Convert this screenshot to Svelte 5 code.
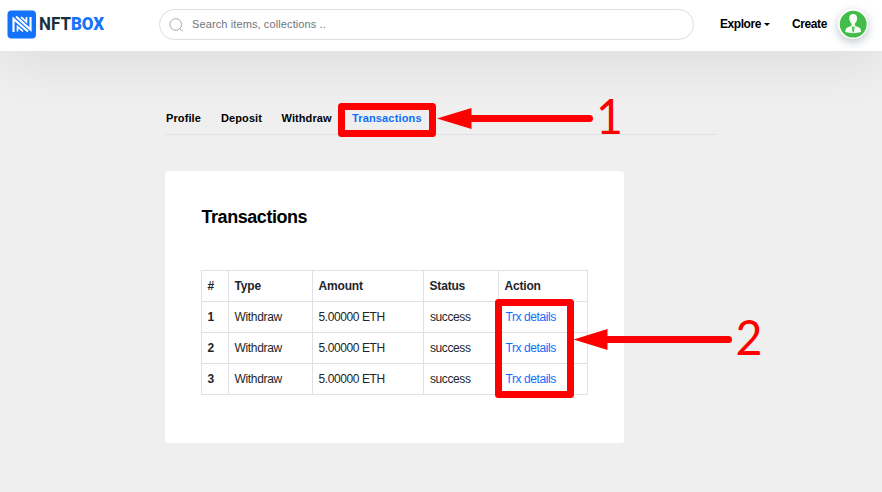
<script>
  const rows = [1, 2, 3];
</script>

<div class="page">
  <header>
    <div class="brand">
      <svg width="30" height="30" viewBox="0 0 30 30">
        <rect x="0.5" y="0.5" width="28.5" height="28" rx="4" fill="#1273fa" />
        <g fill="none" stroke="#fff" stroke-width="2.200">
          <path d="M6.500 22V9l14.500 12.500" />
          <path d="M9 6.500L23.500 19.500V7" />
          <path d="M10.500 21.500v-5l5.500 4.800" stroke-width="1.700" />
          <path d="M14 7l5.500 4.800V7" stroke-width="1.700" />
        </g>
      </svg>
      <span class="name">NFT<b>BOX</b></span>
    </div>
    <div class="search">
      <svg width="15" height="15" viewBox="0 0 15 15" fill="none" stroke="#aaa" stroke-width="1">
        <circle cx="6.700" cy="6.500" r="5.800" /><path d="M10.800 10.600l2.900 2.700" />
      </svg>
      <span>Search items, collections ..</span>
    </div>
    <nav>
      <a class="explore"><span>Explore</span><i></i></a>
      <a class="create">Create</a>
    </nav>
    <div class="avatar">
      <svg width="30" height="30" viewBox="0 0 30 30">
        <circle cx="15" cy="15" r="15" fill="#fff" />
        <circle cx="15.200" cy="15.200" r="13.400" fill="#43bd49" />
        <path d="M15.200 5c-2.800 0-4 1.900-3.900 4.400.1 2.300.9 4 2.200 5l-.1 2.400-4 1.700c-1.500.7-2 2-2.100 4.600 5 1.400 11 1.400 15.800 0-.1-2.600-.6-3.900-2.100-4.600l-4-1.700-.1-2.400c1.300-1 2.100-2.700 2.200-5 .1-2.500-1.100-4.400-3.900-4.400z" fill="#f5fff5" />
        <path d="M13.700 17l1 6.500h1l1-6.500-1.500 1.200z" fill="#43bd49" />
      </svg>
    </div>
  </header>

  <main>
    <div class="tabs">
      <a class="t1">Profile</a>
      <a class="t2">Deposit</a>
      <a class="t3">Withdraw</a>
      <a class="t4">Transactions</a>
    </div>
    <section>
      <h2>Transactions</h2>
      <table>
        <colgroup><col style="width:27px" /><col style="width:84px" /><col style="width:111px" /><col style="width:75px" /><col style="width:89px" /></colgroup>
        <thead><tr><th>#</th><th>Type</th><th>Amount</th><th>Status</th><th>Action</th></tr></thead>
        <tbody>
          {#each rows as n}
            <tr>
              <th>{n}</th><td class="w">Withdraw</td><td class="eth">5.00000 ETH</td><td class="ok">success</td><td class="link"><a>Trx details</a></td>
            </tr>
          {/each}
        </tbody>
      </table>
    </section>
  </main>

  <svg class="marks" width="882" height="492" viewBox="0 0 882 492">
    <g fill="none" stroke="#f00" stroke-width="7" stroke-linejoin="round">
      <rect x="341.500" y="106.500" width="91" height="27" />
      <rect x="498.500" y="302.500" width="72" height="92" />
    </g>
    <g stroke="#f00" stroke-width="7" stroke-linecap="round">
      <path d="M470 118.500H589.500M606 339.500H728.500" />
    </g>
    <path d="M437 118.500l34.500-10.500v21zM573.500 339.500l34-10.500v21z" fill="#f00" />
    <text x="596" y="134" textLength="27" lengthAdjust="spacingAndGlyphs">1</text>
    <text x="735.500" y="355" textLength="27" lengthAdjust="spacingAndGlyphs">2</text>
  </svg>
</div>

<style>
  .page {
    position: relative;
    width: 882px;
    height: 492px;
    overflow: hidden;
    background: #efefef;
    font-family: "Liberation Sans", Arial, sans-serif;
    color: #212529;
    font-size: 12px;
  }
  header {
    position: relative;
    display: flex;
    align-items: flex-start;
    box-sizing: border-box;
    height: 51px;
    background: #fff;
    box-shadow: 0 16px 48px rgba(0, 0, 0, 0.07);
  }
  .brand {
    display: flex;
    width: 152px;
    padding: 10px 0 0 7px;
    box-sizing: border-box;
  }
  .name {
    margin-left: 2px;
    font: 700 18.5px/29px Roboto, sans-serif;
    color: #17303d;
    white-space: nowrap;
    transform: scaleX(0.915);
    transform-origin: 0 0;
  }
  .name b { color: #1873f8; }
  .search {
    display: flex;
    align-items: center;
    box-sizing: border-box;
    width: 535px;
    height: 31px;
    margin: 9px 0 0 7px;
    padding-left: 9px;
    border: 1px solid #ddd;
    border-radius: 16px;
    color: #6c757d;
    font-size: 11px;
  }
  .search svg { position: relative; top: 0.5px; }
  .search span { margin-left: 8px; margin-top: -1px; letter-spacing: 0.11px; }
  nav {
    display: flex;
    margin-left: 26px;
    padding-top: 16px;
    width: 118px;
    font-weight: 700;
    line-height: 16px;
    color: #000;
  }
  .explore { display: flex; align-items: center; width: 72px; }
  .explore span { letter-spacing: -0.43px; }
  .explore i {
    margin-left: 3px;
    border: 3px solid transparent;
    border-top-color: #000;
    border-bottom: 0;
  }
  .create { letter-spacing: -0.4px; }
  .avatar {
    width: 30px;
    height: 30px;
    margin-top: 9px;
    border-radius: 50%;
    box-shadow: 0 3px 10px rgba(40, 70, 80, 0.32);
  }
  main { padding: 46px 0 0 165px; }
  .tabs {
    display: flex;
    box-sizing: border-box;
    width: 551px;
    height: 38px;
    padding: 13px 0 0 1px;
    border-bottom: 1px solid #dee2e6;
    font-size: 11px;
    font-weight: 700;
    line-height: 16px;
    letter-spacing: 0.1px;
    color: #000;
  }
  .t1 { width: 55px; }
  .t2 { width: 60.5px; }
  .t3 { width: 70.5px; }
  .t4 { color: #0d6efd; letter-spacing: 0.15px; }
  section {
    box-sizing: border-box;
    width: 459px;
    height: 272px;
    margin-top: 36px;
    padding: 34px 36px 0;
    background: #fff;
    border-radius: 3px;
  }
  h2 {
    margin: 0 0 41px;
    padding-left: 0.5px;
    font-size: 18px;
    line-height: 24px;
    letter-spacing: -0.45px;
    color: #000;
  }
  table {
    width: 387px;
    table-layout: fixed;
    border-collapse: collapse;
    line-height: 16px;
  }
  th, td {
    height: 30px;
    padding: 0 0 0 5.5px;
    border: 1px solid #dee2e6;
    text-align: left;
    white-space: nowrap;
  }
  thead th { letter-spacing: -0.18px; }
  .w { letter-spacing: -0.32px; }
  .eth { letter-spacing: -0.4px; }
  .ok { padding-left: 6px; letter-spacing: -0.4px; }
  .link { padding-left: 6.5px; letter-spacing: -0.42px; }
  .link a { color: #0d6efd; }
  .marks { position: absolute; left: 0; top: 0; }
  .marks text {
    fill: #f00;
    font: 49px Lato, sans-serif;
  }
</style>
